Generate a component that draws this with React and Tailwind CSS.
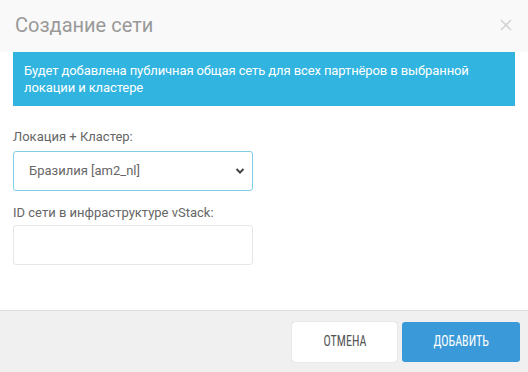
export default function App() {
  return (
    <div className="w-[528px] h-[372px] bg-white flex flex-col font-['Roboto',sans-serif] overflow-hidden">
      {/* Header */}
      <div className="h-[52px] bg-[#f9f9f9] flex items-center justify-between pl-[15px] pr-[16px] shrink-0">
        <h4 className="text-[20px] text-[#999] leading-none mt-[-2px]">Создание сети</h4>
        <svg width="12" height="12" viewBox="0 0 12 12" className="mt-[-2px]">
          <path d="M1 1L11 11M11 1L1 11" stroke="#d4d4d4" strokeWidth="1.6" />
        </svg>
      </div>

      {/* Body */}
      <div className="flex-1 px-[13px]">
        <div className="bg-[#31b5e0] text-white text-[13px] leading-[17px] px-[11px] pt-[10px] pb-[9px] h-[54px] tracking-[-0.1px]">
          Будет добавлена публичная общая сеть для всех партнёров в выбранной локации и кластере
        </div>

        <label className="block text-[13px] text-[#666] mt-[23px] leading-[16px]">Локация + Кластер:</label>
        <div className="relative w-[240px] mt-[6px]">
          <div className="h-[40px] border border-[#7fd0e4] rounded-[3px] flex items-center justify-between pl-[15px] pr-[7px] text-[13px] text-[#666]">
            <span>Бразилия [am2_nl]</span>
            <svg width="10" height="8" viewBox="0 0 10 8">
              <path d="M1.5 2L5 5.5L8.5 2" stroke="#444" strokeWidth="2" fill="none" />
            </svg>
          </div>
        </div>

        <label className="block text-[13px] text-[#666] mt-[14px] leading-[16px]">ID сети в инфраструктуре vStack:</label>
        <div className="w-[240px] h-[40px] mt-[4px] border border-[#e6e6e6] rounded-[3px]" />
      </div>

      {/* Footer */}
      <div className="h-[62px] bg-[#f0f0f0] border-t border-[#dedede] flex items-center justify-end gap-[5px] pr-[8px] shrink-0">
        <button className="w-[105px] h-[40px] bg-white rounded-[3px] shadow-[0_0_1px_rgba(0,0,0,0.3)] text-[14px] text-[#555] font-['Roboto_Condensed','Liberation_Sans_Narrow',Roboto,sans-serif]">
          <span className="inline-block scale-x-[0.86]">ОТМЕНА</span>
        </button>
        <button className="w-[118px] h-[40px] bg-[#3a9ad9] rounded-[3px] text-[14px] text-white font-['Roboto_Condensed','Liberation_Sans_Narrow',Roboto,sans-serif]">
          <span className="inline-block scale-x-[0.86]">ДОБАВИТЬ</span>
        </button>
      </div>
    </div>
  );
}
